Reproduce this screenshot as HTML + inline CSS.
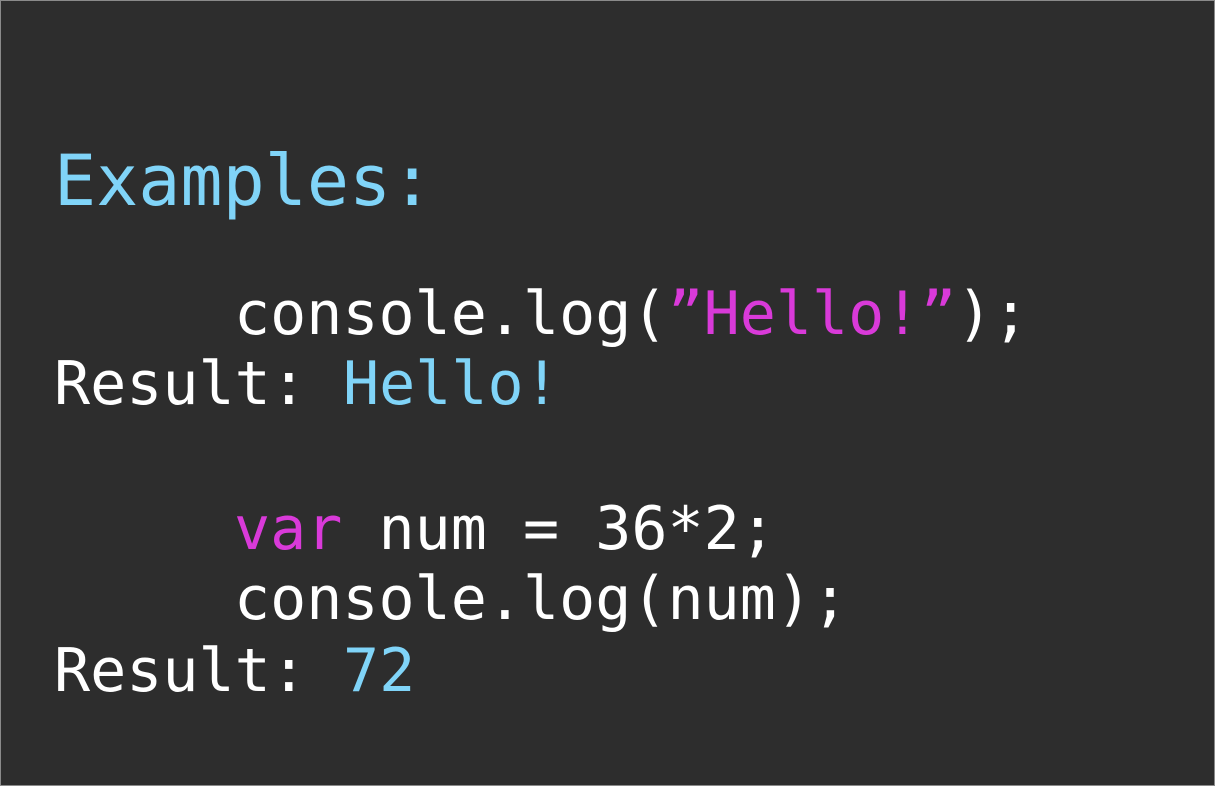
<!DOCTYPE html>
<html><head><meta charset="utf-8"><style>
html,body{margin:0;padding:0;}
body{width:1215px;height:786px;background:#2d2d2d;position:relative;overflow:hidden;box-sizing:border-box;border:1px solid #8a8a8a;}
.l{position:absolute;font-family:"DejaVu Sans Mono","Liberation Mono",monospace;font-size:60px;line-height:60px;color:#fff;white-space:pre;letter-spacing:0px;}
.b{color:#80d4f8}.m{color:#d93ad9}
</style></head><body>
<div class="l b" style="left:53px;top:145px;font-size:70px;line-height:70px">Examples:</div>
<div class="l" style="left:233px;top:283px">console.log(<span class="m">”Hello!”</span>);</div>
<div class="l" style="left:53px;top:353px">Result: <span class="b">Hello!</span></div>
<div class="l" style="left:233px;top:498px"><span class="m">var</span> num = 36*2;</div>
<div class="l" style="left:233px;top:568px">console.log(num);</div>
<div class="l" style="left:53px;top:640px">Result: <span class="b">72</span></div>
</body></html>
